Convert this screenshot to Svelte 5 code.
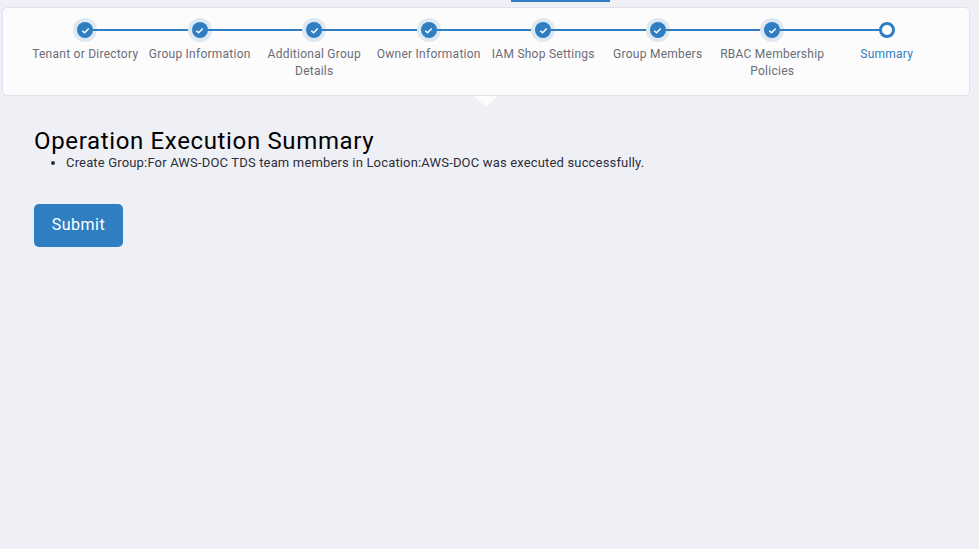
<script>
  const steps = [
    { label: 'Tenant or Directory', done: true },
    { label: 'Group Information', done: true },
    { label: 'Additional Group Details', done: true },
    { label: 'Owner Information', done: true },
    { label: 'IAM Shop Settings', done: true },
    { label: 'Group Members', done: true },
    { label: 'RBAC Membership Policies', done: true },
    { label: 'Summary', done: false }
  ];
</script>

<div class="page">
  <div class="tabbar"><span class="tab-mark"></span></div>
  <section class="card">
    <ol class="steps">
      {#each steps as step, i}
        <li class="step" class:current={!step.done}>
          {#if i < steps.length - 1}<span class="line"></span>{/if}
          {#if step.done}
            <span class="halo">
              <span class="dot">
                <svg viewBox="0 0 10 10" width="9" height="9" aria-hidden="true">
                  <path d="M1.4 5.2 L4 7.6 L8.6 2.8" fill="none" stroke="#fff" stroke-width="1.6" />
                </svg>
              </span>
            </span>
          {:else}
            <span class="halo"><span class="ring"></span></span>
          {/if}
          <span class="label">{step.label}</span>
        </li>
      {/each}
    </ol>
    <span class="pointer"></span>
  </section>

  <main class="content">
    <h1>Operation Execution Summary</h1>
    <ul>
      <li>Create Group:For AWS-DOC TDS team members in Location:AWS-DOC was executed successfully.</li>
    </ul>
    <button type="button">Submit</button>
  </main>
</div>

<style>
  :global(body) {
    margin: 0;
    background: #eff0f5;
  }
  .page {
    height: 549px;
    overflow: hidden;
    background: #eff0f5;
    font-family: Roboto, "Liberation Sans", sans-serif;
    color: #2c2e3a;
  }
  .tabbar {
    height: 7px;
    padding-left: 511px;
  }
  .tab-mark {
    display: block;
    width: 99px;
    height: 2px;
    background: #2f7ec1;
  }
  .card {
    position: relative;
    box-sizing: border-box;
    width: 968px;
    height: 89px;
    margin-left: 2px;
    padding: 0 25px;
    background: #fcfcfd;
    border: 1px solid #e0e1ec;
    border-radius: 5px;
  }
  .steps {
    display: grid;
    grid-template-columns: repeat(8, 114.5px);
    margin: 0;
    padding: 0;
    list-style: none;
  }
  .step {
    position: relative;
    display: flex;
    flex-direction: column;
    align-items: center;
    padding-top: 10px;
    text-align: center;
  }
  .line {
    position: absolute;
    top: 20.5px;
    left: 50%;
    width: 100%;
    height: 2px;
    background: #2f7ec1;
  }
  .halo {
    display: flex;
    align-items: center;
    justify-content: center;
    width: 24px;
    height: 24px;
    border-radius: 50%;
    background: #dde8f3;
  }
  .current .halo {
    background: none;
  }
  .dot {
    position: relative;
    display: flex;
    align-items: center;
    justify-content: center;
    width: 16px;
    height: 16px;
    border-radius: 50%;
    background: #2f7ec1;
  }
  .ring {
    position: relative;
    box-sizing: border-box;
    width: 16px;
    height: 16px;
    border: 3px solid #2f7ec1;
    border-radius: 50%;
    background: #fff;
  }
  .label {
    margin-top: 4px;
    font-size: 12px;
    line-height: 17px;
    color: #6b6c76;
    letter-spacing: 0.25px;
    max-width: 114px;
  }
  .current .label {
    color: #2f7ec1;
  }
  .pointer {
    position: absolute;
    left: 471px;
    top: 88px;
    width: 0;
    height: 0;
    border-left: 12px solid transparent;
    border-right: 12px solid transparent;
    border-top: 11px solid #fcfcfd;
  }
  .content {
    padding: 32px 34px 0;
  }
  h1 {
    margin: 0;
    font-size: 24px;
    line-height: 26px;
    font-weight: 400;
    color: #000;
    letter-spacing: 0.65px;
  }
  ul {
    margin: 0;
    padding-left: 32px;
    font-size: 13px;
    line-height: 17px;
    letter-spacing: 0.165px;
  }
  button {
    display: block;
    width: 89px;
    height: 43px;
    margin-top: 33px;
    padding: 0 0 2px;
    border: 0;
    border-radius: 5px;
    background: #2f7ec1;
    color: #fff;
    font: inherit;
    font-size: 16px;
    letter-spacing: 0.5px;
  }
</style>
